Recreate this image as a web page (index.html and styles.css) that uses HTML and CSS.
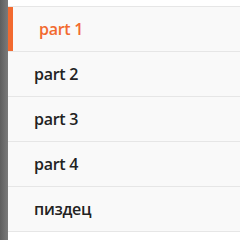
FILE: index.html
```html
<!DOCTYPE html>
<html>
	<head>
		<meta charset="utf-8"/>
		<title>menu</title>
		<link rel="stylesheet" href="styles.css">
	</head>
	<body>
		<div class="shadow"></div>
		<nav class="menu">
			<a class="item active" href="#">part 1</a>
			<a class="item" href="#">part 2</a>
			<a class="item" href="#">part 3</a>
			<a class="item" href="#">part 4</a>
			<a class="item" href="#">пиздец</a>
		</nav>
	</body>
</html>
```

FILE: styles.css
```css
html, body {
	margin: 0;
	padding: 0;
	height: 100%;
}
body {
	display: flex;
	background: #fff;
	font-family: 'Open Sans', 'Noto Sans', sans-serif;
}
.shadow {
	width: 8px;
	flex: none;
	background: linear-gradient(to right, #5e5e5e, #7a7a7a);
}
.menu {
	flex: 1;
	display: flex;
	flex-direction: column;
	padding-top: 6px;
}
.item {
	display: flex;
	align-items: center;
	height: 44px;
	padding-left: 26px;
	background: #f9f9f9;
	border-top: 1px solid #e6e6e6;
	color: #222;
	font-size: 16px;
	font-weight: 600;
	letter-spacing: -0.3px;
	text-decoration: none;
}
.item:last-child {
	border-bottom: 1px solid #e6e6e6;
}
.item.active {
	color: #f26a30;
	padding-left: 31px;
	box-shadow: inset 5px 0 0 #f26a30;
}
```
